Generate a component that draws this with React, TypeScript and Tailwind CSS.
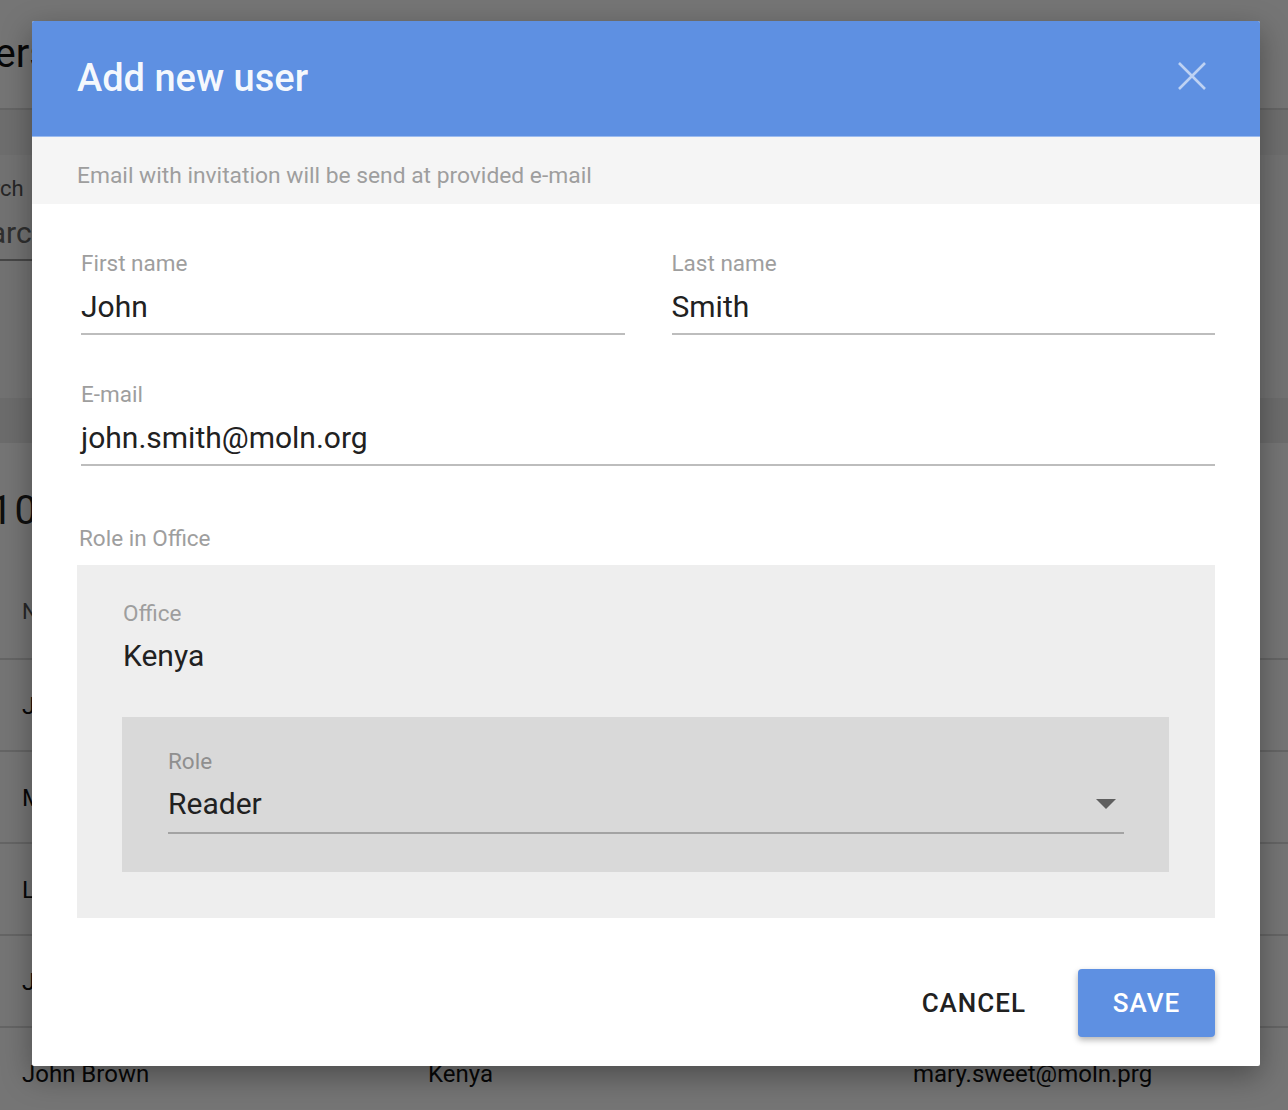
import React from 'react'

interface Row {
  name: string
  office: string
  email: string
}

const rows: Row[] = [
  { name: 'John Smith', office: 'Kenya', email: 'john.smith@moln.org' },
  { name: 'Mary Sweet', office: 'Kenya', email: 'mary.sweet@moln.org' },
  { name: 'Lucy Green', office: 'Kenya', email: 'lucy.green@moln.org' },
  { name: 'James Black', office: 'Kenya', email: 'james.black@moln.org' },
  { name: 'John Brown', office: 'Kenya', email: 'mary.sweet@moln.prg' },
]

const Field: React.FC<{ label: string; value: string; className?: string }> = ({ label, value, className }) => (
  <div className={className}>
    <div className="text-[22.5px] leading-[24px] text-[#9e9e9e]">{label}</div>
    <div className="mt-[14px] border-b-2 border-[#bdbdbd] pb-[8px] text-[30px] leading-[36px] text-[#212121]">{value}</div>
  </div>
)

const App: React.FC = () => {
  return (
    <div className="relative h-[1110px] w-full overflow-hidden bg-white font-['Roboto',sans-serif]">
      {/* page behind the dialog */}
      <div className="flex h-[110px] items-center border-b-2 border-[#dcdcdc]">
        <h1 className="-ml-[52px] text-[40px] text-[#111]">Users</h1>
      </div>
      <div className="h-[45px] bg-[#f0f0f0]" />
      <div className="h-[243px] bg-[#f8f8f8]">
        <div className="-ml-[44px] w-[300px] pt-[22px]">
          <div className="text-[22px] leading-[24px] text-[#555]">Search</div>
          <div className="mt-[14px] border-b-2 border-[#999] pb-[8px] text-[30px] leading-[36px] text-[#666]">Search</div>
        </div>
      </div>
      <div className="h-[45px] bg-[#ececec]" />
      <div className="flex h-[122px] items-center pt-[14px]">
        <span className="-ml-[10px] text-[40px] tracking-[2px] text-[#222]">10</span>
      </div>
      <div className="flex h-[95px] items-center border-b-2 border-[#dcdcdc] pl-[22px] text-[22px] text-[#555]">Name</div>
      {rows.map((r) => (
        <div key={r.name} className="flex h-[92px] items-center border-b-2 border-[#dcdcdc] pt-[2px] text-[24px] text-[#111]">
          <span className="w-[406px] pl-[22px]">{r.name}</span>
          <span className="w-[485px] pl-[22px]">{r.office}</span>
          <span className="pl-[22px]">{r.email}</span>
        </div>
      ))}

      {/* dialog */}
      <div className="absolute inset-0 bg-black/[0.54] pl-[32px] pt-[21px]">
        <div className="w-[1228px] overflow-hidden rounded-[2px] bg-white shadow-[0_10px_30px_rgba(0,0,0,0.35)]">
          <div className="flex h-[115px] items-center justify-between bg-[#5e90e2] pl-[45px] pr-[54px]">
            <h2 className="text-[38px] font-medium text-white/95">Add new user</h2>
            <button className="mb-[6px] text-white/60">
              <svg width="28" height="28" viewBox="0 0 28 28" fill="none" stroke="currentColor" strokeWidth="2.6">
                <path d="M1 1 L27 27 M27 1 L1 27" />
              </svg>
            </button>
          </div>
          <div className="flex h-[68px] items-center border-t border-[#9bbbef] bg-[#f5f5f5] pl-[45px] pt-[11px] text-[22.8px] text-[#9e9e9e]">
            Email with invitation will be send at provided e-mail
          </div>

          <div className="px-[45px] pb-[29px] pt-[47px]">
            <div className="flex gap-[47px] pl-[4px]">
              <Field label="First name" value="John" className="flex-1" />
              <Field label="Last name" value="Smith" className="flex-1" />
            </div>
            <Field label="E-mail" value="john.smith@moln.org" className="mt-[47px] pl-[4px]" />

            <div className="mt-[60px] pl-[2px] text-[22.5px] leading-[24px] text-[#9e9e9e]">Role in Office</div>
            <div className="mt-[15px] bg-[#eeeeee] px-[46px] pb-[46px] pt-[36px]">
              <div className="text-[22.5px] leading-[24px] text-[#9e9e9e]">Office</div>
              <div className="mt-[13px] text-[30px] leading-[36px] text-[#212121]">Kenya</div>
              <div className="-ml-px mt-[43px] bg-[#d9d9d9] pb-[38px] pl-[46px] pr-[45px] pt-[32px]">
                <div className="text-[22.5px] leading-[24px] text-[#8f8f8f]">Role</div>
                <div className="mt-[13px] flex items-center justify-between border-b-2 border-[#a3a3a3] pb-[10px]">
                  <span className="text-[30px] leading-[36px] text-[#212121]">Reader</span>
                  <svg width="20" height="10" viewBox="0 0 20 10" className="mr-[8px]">
                    <path d="M0 0 L20 0 L10 10 Z" fill="#5f5f5f" />
                  </svg>
                </div>
              </div>
            </div>

            <div className="mt-[51px] flex items-center justify-end gap-[28px]">
              <button className="h-[68px] px-[24px] pt-[1px] text-[26px] font-medium tracking-[1px] text-[#212121]">CANCEL</button>
              <button className="h-[68px] w-[137px] rounded-[4px] bg-[#5e90e2] pt-[1px] text-[26px] font-medium tracking-[1px] text-white shadow-[0_3px_6px_rgba(0,0,0,0.3)]">
                SAVE
              </button>
            </div>
          </div>
        </div>
      </div>
    </div>
  )
}

export default App
